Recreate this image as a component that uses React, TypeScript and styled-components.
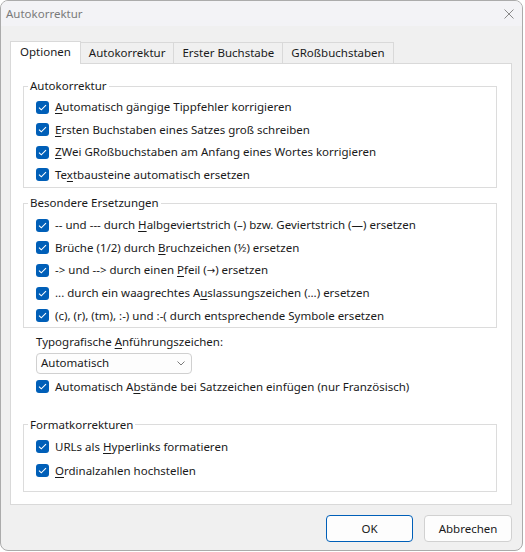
import React from "react";
import styled, { createGlobalStyle } from "styled-components";

const FONT = `"Noto Sans", "Open Sans", sans-serif`;

const GlobalStyle = createGlobalStyle`
  * {
    box-sizing: border-box;
  }
  body {
    margin: 0;
    background: #ffffff;
  }
  u {
    text-decoration-thickness: 1px;
    text-underline-offset: 2px;
  }
`;

const Window = styled.div`
  width: 523px;
  height: 551px;
  border: 1px solid #ababab;
  border-radius: 8px;
  overflow: hidden;
  background: #f0f0f0;
  font-family: ${FONT};
  font-size: 11.5px;
  line-height: 16px;
  color: #1a1a1a;
  display: flex;
  flex-direction: column;
`;

const TitleBar = styled.div`
  height: 25px;
  flex: none;
  background: #f3f3f6;
  display: flex;
  align-items: center;
  justify-content: space-between;
  padding: 0 8px 0 5px;
  color: #7a7a7a;
`;

const Body = styled.div`
  padding: 15px 10px 0 9px;
  display: flex;
  flex-direction: column;
`;

const TabRow = styled.div`
  display: flex;
  align-items: flex-start;
  height: 23px;
  margin-bottom: -1px;
  position: relative;
  z-index: 1;
`;

const Tab = styled.div<{ $active?: boolean }>`
  height: ${(p) => (p.$active ? "23px" : "21px")};
  margin-top: ${(p) => (p.$active ? "0" : "1px")};
  padding: 0 ${(p) => (p.$active ? "9px" : "8px")} ${(p) => (p.$active ? "2px" : "0")};
  border: 1px solid #d9d9d9;
  border-bottom: none;
  background: ${(p) => (p.$active ? "#ffffff" : "#f0f0f0")};
  display: flex;
  align-items: center;
  white-space: nowrap;

  & + & {
    margin-left: -1px;
  }
`;

const Panel = styled.div`
  height: 442px;
  border: 1px solid #d9d9d9;
  background: #ffffff;
  padding: 14px 14px 0 12px;
  display: flex;
  flex-direction: column;
`;

const Group = styled.fieldset<{ $top?: number; $pt: number; $pb: number }>`
  margin: ${(p) => p.$top ?? 0}px 0 0;
  padding: ${(p) => p.$pt}px 8px ${(p) => p.$pb}px 4px;
  border: 1px solid #dcdcdc;
  min-width: 0;
`;

const Legend = styled.legend`
  padding: 0 2px;
  line-height: 16px;
`;

const GroupBody = styled.div`
  padding-left: 8px;
  display: flex;
  flex-direction: column;
`;

const Row = styled.label<{ $h: number }>`
  height: ${(p) => p.$h}px;
  display: flex;
  align-items: center;
  gap: 6px;
  white-space: nowrap;
`;

const Box = styled.span`
  width: 13px;
  height: 13px;
  flex: none;
  border-radius: 3px;
  background: #005fb8;
  display: flex;
  align-items: center;
  justify-content: center;
`;

const Arrow = styled.span`
  font-family: "DejaVu Sans", sans-serif;
  font-size: 10px;
`;

const QuoteSection = styled.div`
  padding-left: 13px;
  display: flex;
  flex-direction: column;
`;

const FieldLabel = styled.div`
  margin-top: 6px;
`;

const Select = styled.div`
  margin: 3px 0 2px;
  width: 156px;
  height: 21px;
  border: 1px solid #d0d0d0;
  border-radius: 4px;
  background: #fdfdfd;
  padding: 0 6px 0 4px;
  display: flex;
  align-items: center;
  justify-content: space-between;
`;

const Footer = styled.div`
  margin-top: 10px;
  display: flex;
  justify-content: flex-end;
  gap: 11px;
`;

const Button = styled.button<{ $primary?: boolean; $w: number }>`
  width: ${(p) => p.$w}px;
  height: 27px;
  font: inherit;
  color: #1a1a1a;
  background: #fdfdfd;
  border: 1px solid ${(p) => (p.$primary ? "#005fb8" : "#d1d1d1")};
  border-radius: 4px;
  padding: 0;
`;

const Check = () => (
  <Box>
    <svg width="9" height="7" viewBox="0 0 9 7">
      <path d="M1 3.6 L3.3 5.8 L8 1.2" fill="none" stroke="#ffffff" strokeWidth="1.1" />
    </svg>
  </Box>
);

const CheckRow: React.FC<{ h: number; children: React.ReactNode }> = ({ h, children }) => (
  <Row $h={h}>
    <Check />
    <span>{children}</span>
  </Row>
);

const autoItems: React.ReactNode[] = [
  <><u>A</u>utomatisch gängige Tippfehler korrigieren</>,
  <><u>E</u>rsten Buchstaben eines Satzes groß schreiben</>,
  <><u>Z</u>Wei GRoßbuchstaben am Anfang eines Wortes korrigieren</>,
  <>Te<u>x</u>tbausteine automatisch ersetzen</>,
];

const specialItems: React.ReactNode[] = [
  <>-- und --- durch <u>H</u>albgeviertstrich (–) bzw. Geviertstrich (—) ersetzen</>,
  <>Brüche (1/2) durch <u>B</u>ruchzeichen (½) ersetzen</>,
  <>-&gt; und --&gt; durch einen <u>P</u>feil (<Arrow>→</Arrow>) ersetzen</>,
  <>... durch ein waagrechtes A<u>u</u>slassungszeichen (…) ersetzen</>,
  <>(c), (r), (tm), :-) und :-( durch entsprechende Symbole ersetzen</>,
];

const formatItems: React.ReactNode[] = [
  <>URLs als <u>H</u>yperlinks formatieren</>,
  <><u>O</u>rdinalzahlen hochstellen</>,
];

const tabs = ["Optionen", "Autokorrektur", "Erster Buchstabe", "GRoßbuchstaben"];

export default function App() {
  return (
    <>
      <GlobalStyle />
      <Window>
        <TitleBar>
          <span>Autokorrektur</span>
          <svg width="10" height="10" viewBox="0 0 10 10">
            <path d="M0.5 0.5 L9.5 9.5 M9.5 0.5 L0.5 9.5" stroke="#8a8a8a" strokeWidth="1" />
          </svg>
        </TitleBar>
        <Body>
          <TabRow>
            {tabs.map((t, i) => (
              <Tab key={t} $active={i === 0}>
                {t}
              </Tab>
            ))}
          </TabRow>
          <Panel>
            <Group $pt={2} $pb={1}>
              <Legend>Autokorrektur</Legend>
              <GroupBody>
                {autoItems.map((item, i) => (
                  <CheckRow key={i} h={22.5}>
                    {item}
                  </CheckRow>
                ))}
              </GroupBody>
            </Group>

            <Group $top={7} $pt={3} $pb={0}>
              <Legend>Besondere Ersetzungen</Legend>
              <GroupBody>
                {specialItems.map((item, i) => (
                  <CheckRow key={i} h={22.6}>
                    {item}
                  </CheckRow>
                ))}
              </GroupBody>
            </Group>

            <QuoteSection>
              <FieldLabel>
                Typografische <u>A</u>nführungszeichen:
              </FieldLabel>
              <Select>
                <span>Automatisch</span>
                <svg width="8" height="5" viewBox="0 0 8 5">
                  <path d="M0.5 0.5 L4 4 L7.5 0.5" fill="none" stroke="#7a7a7a" strokeWidth="1" />
                </svg>
              </Select>
              <CheckRow h={22}>
                Automatisch A<u>b</u>stände bei Satzzeichen einfügen (nur Französisch)
              </CheckRow>
            </QuoteSection>

            <Group $top={19} $pt={2} $pb={8}>
              <Legend>Formatkorrekturen</Legend>
              <GroupBody>
                {formatItems.map((item, i) => (
                  <CheckRow key={i} h={24}>
                    {item}
                  </CheckRow>
                ))}
              </GroupBody>
            </Group>
          </Panel>
          <Footer>
            <Button $primary $w={87}>
              OK
            </Button>
            <Button $w={88}>Abbrechen</Button>
          </Footer>
        </Body>
      </Window>
    </>
  );
}
